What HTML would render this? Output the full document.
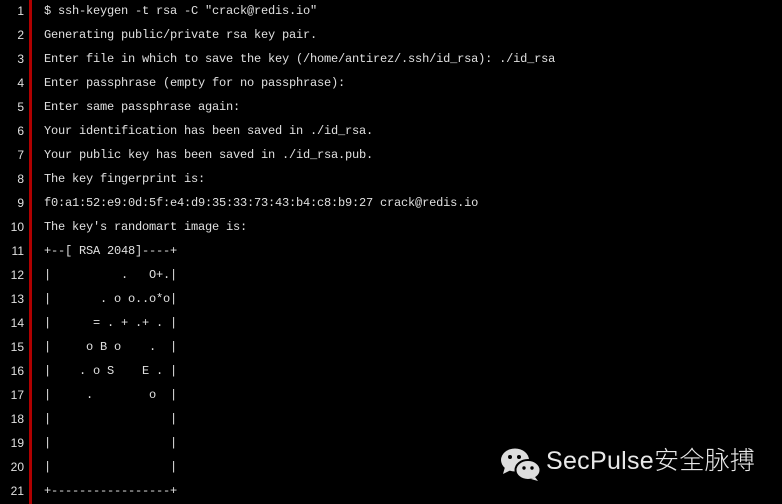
<!DOCTYPE html><html><head><style>
body{margin:0;width:782px;height:504px;background:#000;overflow:hidden;position:relative;font-family:"Liberation Mono",monospace;font-size:12px;color:#e0e0e0}
.bar{position:absolute;left:29px;top:0;width:3px;height:504px;background:#b00000}
.l{position:absolute;left:0;height:24px;line-height:24px;white-space:pre}
.n{position:absolute;left:0;width:24px;text-align:right;font-family:"Liberation Sans",sans-serif;font-size:12px}
.t{position:absolute;left:44px;letter-spacing:-0.2px}
.wm{position:absolute;left:546px;top:446px;font-family:"Liberation Sans","Noto Sans CJK SC",sans-serif;font-size:25px;color:#e8e8e8;font-weight:300;white-space:nowrap;line-height:30px;letter-spacing:0.3px}
</style></head><body><div class="bar"></div>
<div class="l" style="top:-1px"><span class="n">1</span><span class="t">$ ssh-keygen -t rsa -C "crack@redis.io"</span></div>
<div class="l" style="top:23px"><span class="n">2</span><span class="t">Generating public/private rsa key pair.</span></div>
<div class="l" style="top:47px"><span class="n">3</span><span class="t">Enter file in which to save the key (/home/antirez/.ssh/id_rsa): ./id_rsa</span></div>
<div class="l" style="top:71px"><span class="n">4</span><span class="t">Enter passphrase (empty for no passphrase):</span></div>
<div class="l" style="top:95px"><span class="n">5</span><span class="t">Enter same passphrase again:</span></div>
<div class="l" style="top:119px"><span class="n">6</span><span class="t">Your identification has been saved in ./id_rsa.</span></div>
<div class="l" style="top:143px"><span class="n">7</span><span class="t">Your public key has been saved in ./id_rsa.pub.</span></div>
<div class="l" style="top:167px"><span class="n">8</span><span class="t">The key fingerprint is:</span></div>
<div class="l" style="top:191px"><span class="n">9</span><span class="t">f0:a1:52:e9:0d:5f:e4:d9:35:33:73:43:b4:c8:b9:27 crack@redis.io</span></div>
<div class="l" style="top:215px"><span class="n">10</span><span class="t">The key's randomart image is:</span></div>
<div class="l" style="top:239px"><span class="n">11</span><span class="t">+--[ RSA 2048]----+</span></div>
<div class="l" style="top:263px"><span class="n">12</span><span class="t">|          .   O+.|</span></div>
<div class="l" style="top:287px"><span class="n">13</span><span class="t">|       . o o..o*o|</span></div>
<div class="l" style="top:311px"><span class="n">14</span><span class="t">|      = . + .+ . |</span></div>
<div class="l" style="top:335px"><span class="n">15</span><span class="t">|     o B o    .  |</span></div>
<div class="l" style="top:359px"><span class="n">16</span><span class="t">|    . o S    E . |</span></div>
<div class="l" style="top:383px"><span class="n">17</span><span class="t">|     .        o  |</span></div>
<div class="l" style="top:407px"><span class="n">18</span><span class="t">|                 |</span></div>
<div class="l" style="top:431px"><span class="n">19</span><span class="t">|                 |</span></div>
<div class="l" style="top:455px"><span class="n">20</span><span class="t">|                 |</span></div>
<div class="l" style="top:479px"><span class="n">21</span><span class="t">+-----------------+</span></div>
<svg style="position:absolute;left:500px;top:447px" width="42" height="34" viewBox="0 0 42 34">
<ellipse cx="15" cy="13" rx="14" ry="11.5" fill="#ddd"/><path d="M5 20 L3 27 L11 23Z" fill="#ddd"/>
<circle cx="10" cy="10" r="2" fill="#000"/><circle cx="19" cy="10" r="2" fill="#000"/>
<ellipse cx="28" cy="23" rx="12.5" ry="10" stroke="#000" stroke-width="2" fill="#ddd"/><path d="M35 30 L38 34 L31 32Z" fill="#ddd"/>
<circle cx="24" cy="21" r="1.7" fill="#000"/><circle cx="32" cy="21" r="1.7" fill="#000"/>
</svg>
<div class="wm">SecPulse安全脉搏</div>
</body></html>
